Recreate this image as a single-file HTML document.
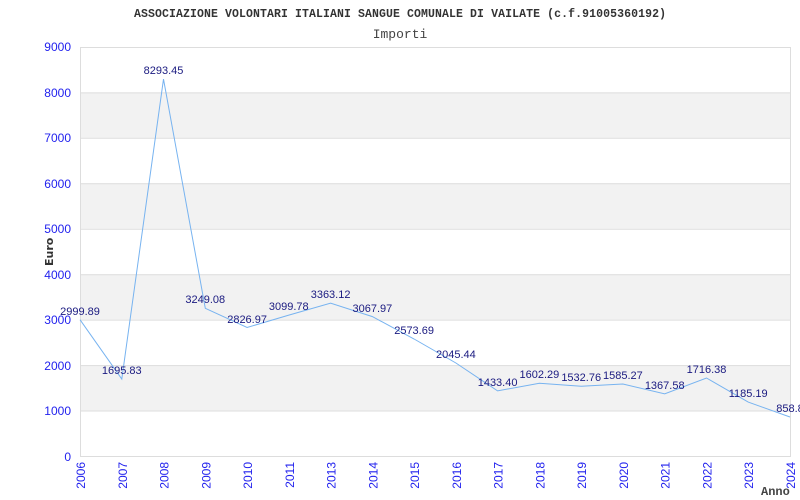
<!DOCTYPE html>
<html><head><style>body{margin:0;background:#fff}svg{display:block}</style></head><body>
<svg width="800" height="500" xmlns="http://www.w3.org/2000/svg">
<rect width="800" height="500" fill="#fff"/>
<g fill="#f2f2f2">
<rect x="80.5" y="92.4" width="709.5" height="45.4"/>
<rect x="80.5" y="183.3" width="709.5" height="45.4"/>
<rect x="80.5" y="274.2" width="709.5" height="45.4"/>
<rect x="80.5" y="365.1" width="709.5" height="45.4"/>
</g>
<g stroke="#dddddd" stroke-width="1">
<line x1="80" y1="47.5" x2="790" y2="47.5"/>
<line x1="80" y1="92.9" x2="790" y2="92.9"/>
<line x1="80" y1="138.3" x2="790" y2="138.3"/>
<line x1="80" y1="183.8" x2="790" y2="183.8"/>
<line x1="80" y1="229.2" x2="790" y2="229.2"/>
<line x1="80" y1="274.7" x2="790" y2="274.7"/>
<line x1="80" y1="320.1" x2="790" y2="320.1"/>
<line x1="80" y1="365.6" x2="790" y2="365.6"/>
<line x1="80" y1="411" x2="790" y2="411"/>
<line x1="80" y1="456.5" x2="790" y2="456.5"/>
<line x1="80.5" y1="47" x2="80.5" y2="457"/>
<line x1="790.5" y1="47" x2="790.5" y2="457"/>
</g>
<g font-family="Liberation Sans, sans-serif" font-size="12" fill="#2222ee" text-anchor="end">
<text x="71" y="51">9000</text><text x="71" y="97">8000</text><text x="71" y="142">7000</text>
<text x="71" y="188">6000</text><text x="71" y="233">5000</text><text x="71" y="279">4000</text>
<text x="71" y="324">3000</text><text x="71" y="370">2000</text><text x="71" y="415">1000</text>
<text x="71" y="461">0</text>
</g>
<g font-family="Liberation Sans, sans-serif" font-size="12" fill="#2222ee" text-anchor="end">
<text transform="translate(85,462) rotate(-90)">2006</text>
<text transform="translate(126.8,462) rotate(-90)">2007</text>
<text transform="translate(168.5,462) rotate(-90)">2008</text>
<text transform="translate(210.3,462) rotate(-90)">2009</text>
<text transform="translate(252.1,462) rotate(-90)">2010</text>
<text transform="translate(293.8,462) rotate(-90)">2011</text>
<text transform="translate(335.6,462) rotate(-90)">2013</text>
<text transform="translate(377.4,462) rotate(-90)">2014</text>
<text transform="translate(419.1,462) rotate(-90)">2015</text>
<text transform="translate(460.9,462) rotate(-90)">2016</text>
<text transform="translate(502.6,462) rotate(-90)">2017</text>
<text transform="translate(544.4,462) rotate(-90)">2018</text>
<text transform="translate(586.2,462) rotate(-90)">2019</text>
<text transform="translate(627.9,462) rotate(-90)">2020</text>
<text transform="translate(669.7,462) rotate(-90)">2021</text>
<text transform="translate(711.5,462) rotate(-90)">2022</text>
<text transform="translate(753.2,462) rotate(-90)">2023</text>
<text transform="translate(795,462) rotate(-90)">2024</text>
</g>
<polyline fill="none" stroke="#77b3f0" stroke-width="1" points="80,319.7 121.8,379 163.5,79.1 205.3,308.3 247.1,327.5 288.8,315.1 330.6,303.2 372.4,316.6 414.1,339 455.9,363 497.6,390.9 539.4,383.2 581.2,386.3 622.9,384 664.7,393.9 706.5,378 748.2,402.1 790,417"/>
<g font-family="Liberation Sans, sans-serif" font-size="11" fill="#1a1a80" text-anchor="middle">
<text x="80" y="315">2999.89</text>
<text x="121.8" y="374">1695.83</text>
<text x="163.5" y="74">8293.45</text>
<text x="205.3" y="303">3249.08</text>
<text x="247.1" y="323">2826.97</text>
<text x="288.8" y="310">3099.78</text>
<text x="330.6" y="298">3363.12</text>
<text x="372.4" y="312">3067.97</text>
<text x="414.1" y="334">2573.69</text>
<text x="455.9" y="358">2045.44</text>
<text x="497.6" y="386">1433.40</text>
<text x="539.4" y="378">1602.29</text>
<text x="581.2" y="381">1532.76</text>
<text x="622.9" y="379">1585.27</text>
<text x="664.7" y="389">1367.58</text>
<text x="706.5" y="373">1716.38</text>
<text x="748.2" y="397">1185.19</text>
<text x="790" y="412">858.8</text>
</g>
<text x="134" y="17" textLength="532" font-family="Liberation Mono, monospace" font-size="11.5" font-weight="bold" fill="#333">ASSOCIAZIONE VOLONTARI ITALIANI SANGUE COMUNALE DI VAILATE (c.f.91005360192)</text>
<text x="400" y="38" font-family="Liberation Mono, monospace" font-size="13" fill="#444" text-anchor="middle">Importi</text>
<text transform="translate(53,266) rotate(-90)" font-family="DejaVu Sans, sans-serif" font-size="11" font-weight="bold" fill="#333">Euro</text>
<text x="761" y="495" font-family="Liberation Mono, monospace" font-size="12" font-weight="bold" fill="#444">Anno</text>
</svg>
</body></html>
